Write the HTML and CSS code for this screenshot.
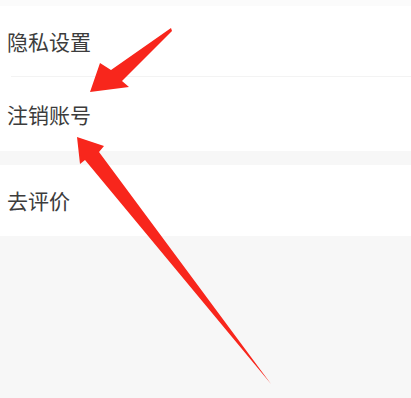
FILE: index.html
```html
<!DOCTYPE html>
<html lang="zh-CN">
<head>
<meta charset="utf-8">
<title>设置</title>
<link rel="stylesheet" href="styles.css">
</head>
<body>
<div class="page">
  <div class="top-strip"></div>
  <div class="group">
    <div class="row row-first">隐私设置</div>
    <div class="divider"></div>
    <div class="row row-second">注销账号</div>
  </div>
  <div class="group-gap"></div>
  <div class="group">
    <div class="row row-third">去评价</div>
  </div>
  <svg class="annotations" width="411" height="398" viewBox="0 0 411 398" xmlns="http://www.w3.org/2000/svg">
    <polygon fill="#f8261c" points="171,28 111,70 100,63 90,92 129,87 122,81 172,31"/>
    <polygon fill="#f8261c" points="77,137 104,146 99,152 271,384 85,160 80,164"/>
  </svg>
</div>
</body>
</html>
```
FILE: styles.css
```css
html, body {
  margin: 0;
  padding: 0;
}
body {
  background: #f7f7f7;
  font-family: "Noto Sans CJK SC", "Noto Sans", sans-serif;
  color: #3c3c3c;
}
.page {
  position: relative;
  width: 411px;
  height: 398px;
  overflow: hidden;
}
.top-strip {
  height: 6px;
  background: #fbfbfb;
}
.group {
  background: #ffffff;
  display: flex;
  flex-direction: column;
}
.row {
  display: flex;
  align-items: center;
  padding-left: 7px;
  font-size: 21px;
  line-height: 1;
}
.row-first {
  height: 70px;
}
.row-second {
  height: 74px;
}
.row-third {
  height: 71px;
}
.divider {
  height: 1px;
  margin-left: 11px;
  background: #f3f3f3;
}
.group-gap {
  height: 14px;
}
.annotations {
  position: absolute;
  left: 0;
  top: 0;
  pointer-events: none;
}
```
